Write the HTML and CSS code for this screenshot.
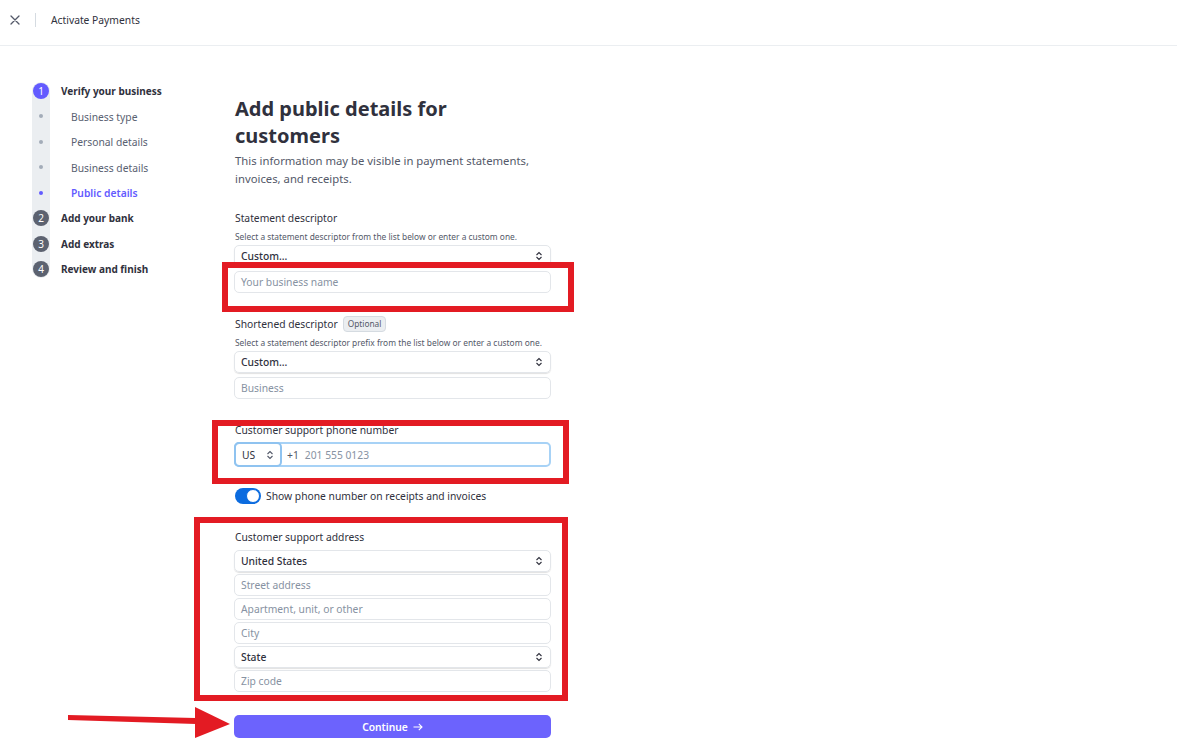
FILE: index.html
```html
<!DOCTYPE html>
<html>
<head>
<meta charset="utf-8">
<link rel="stylesheet" href="styles.css">
</head>
<body>
<div class="page">
  <header class="topbar">
    <svg class="close" width="10" height="10" viewBox="0 0 10 10"><path d="M1 1L9 9M9 1L1 9" stroke="#545969" stroke-width="1.3" stroke-linecap="round"/></svg>
    <span class="divider"></span>
    <span class="title">Activate Payments</span>
  </header>
  <div class="layout">
    <nav class="sidebar">
      <div class="steps">
        <div class="rail"></div>
        <span class="num active r1">1</span><span class="step-label r1">Verify your business</span>
        <span class="dot r2"></span><span class="sub r2">Business type</span>
        <span class="dot r3"></span><span class="sub r3">Personal details</span>
        <span class="dot r4"></span><span class="sub r4">Business details</span>
        <span class="dot active r5"></span><span class="sub current r5">Public details</span>
        <span class="num r6">2</span><span class="step-label r6">Add your bank</span>
        <span class="num r7">3</span><span class="step-label r7">Add extras</span>
        <span class="num r8">4</span><span class="step-label r8">Review and finish</span>
      </div>
    </nav>
    <main class="main">
      <h1 class="heading">Add public details for customers</h1>
      <p class="lead">This information may be visible in payment statements, invoices, and receipts.</p>

      <section class="group g1">
        <div class="label">Statement descriptor</div>
        <div class="help">Select a statement descriptor from the list below or enter a custom one.</div>
        <div class="field select"><span>Custom...</span><svg class="chev" width="8" height="10" viewBox="0 0 8 10"><path d="M1.5 4L4 1.5L6.5 4M1.5 6L4 8.5L6.5 6" fill="none" stroke="#30313d" stroke-width="1.1"/></svg></div>
        <div class="field input gap4"><span class="ph">Your business name</span></div>
      </section>

      <section class="group g2">
        <div class="label">Shortened descriptor <span class="badge">Optional</span></div>
        <div class="help">Select a statement descriptor prefix from the list below or enter a custom one.</div>
        <div class="field select"><span>Custom...</span><svg class="chev" width="8" height="10" viewBox="0 0 8 10"><path d="M1.5 4L4 1.5L6.5 4M1.5 6L4 8.5L6.5 6" fill="none" stroke="#30313d" stroke-width="1.1"/></svg></div>
        <div class="field input gap4"><span class="ph">Business</span></div>
      </section>

      <section class="group g3">
        <div class="label">Customer support phone number</div>
        <div class="phone">
          <div class="cc"><span>US</span><svg width="8" height="10" viewBox="0 0 8 10"><path d="M1.5 4L4 1.5L6.5 4M1.5 6L4 8.5L6.5 6" fill="none" stroke="#545969" stroke-width="1.1"/></svg></div>
          <span class="prefix">+1</span>
          <span class="ph">201 555 0123</span>
        </div>
      </section>

      <div class="toggle-row">
        <span class="toggle"><span class="knob"></span></span>
        <span>Show phone number on receipts and invoices</span>
      </div>

      <section class="group g4">
        <div class="label">Customer support address</div>
        <div class="stack">
          <div class="field select"><span>United States</span><svg class="chev" width="8" height="10" viewBox="0 0 8 10"><path d="M1.5 4L4 1.5L6.5 4M1.5 6L4 8.5L6.5 6" fill="none" stroke="#30313d" stroke-width="1.1"/></svg></div>
          <div class="field input"><span class="ph">Street address</span></div>
          <div class="field input"><span class="ph">Apartment, unit, or other</span></div>
          <div class="field input"><span class="ph">City</span></div>
          <div class="field select"><span>State</span><svg class="chev" width="8" height="10" viewBox="0 0 8 10"><path d="M1.5 4L4 1.5L6.5 4M1.5 6L4 8.5L6.5 6" fill="none" stroke="#30313d" stroke-width="1.1"/></svg></div>
          <div class="field input"><span class="ph">Zip code</span></div>
        </div>
      </section>

      <button class="continue">Continue <svg class="arrow" width="10" height="8" viewBox="0 0 10 8"><path d="M0.5 4H9M5.8 0.8L9 4L5.8 7.2" fill="none" stroke="#fff" stroke-width="1.1"/></svg></button>
    </main>
  </div>

  <div class="mark m1"></div>
  <div class="mark m2"></div>
  <div class="mark m3"></div>
  <svg class="pointer" width="170" height="36" viewBox="0 0 170 36">
    <polygon points="0,8 128,11 128,17 0,13" fill="#e31b23"/>
    <polygon points="127,0 162,17 127,31" fill="#e31b23"/>
  </svg>
</div>
</body>
</html>
```

FILE: styles.css
```css
* { box-sizing: border-box; }
html, body { margin: 0; padding: 0; background: #fff; }
body {
  font-family: "Noto Sans", "Open Sans", sans-serif;
  color: #30313d;
  font-size: 10.3px;
}
.page { position: relative; width: 1177px; height: 742px; overflow: hidden; }

.topbar {
  height: 46px;
  border-bottom: 1px solid #ebeef1;
  display: flex;
  align-items: center;
  padding-left: 10px;
}
.close { display: block; margin-top: -6px; }
.divider { width: 1px; height: 14px; background: #d5dbe1; margin: -6px 15px 0 15px; }
.title { font-size: 10.3px; color: #30313d; margin-top: -6px; }

.layout { display: flex; }
.sidebar { width: 234px; padding-left: 32px; padding-top: 32px; flex: none; }
.steps {
  display: grid;
  grid-template-columns: 18px auto;
  grid-template-rows: repeat(8, 25.5px);
  column-gap: 11px;
  align-items: center;
}
.rail {
  grid-column: 1; grid-row: 1 / -1;
  align-self: stretch;
  margin: 3.75px 0;
  background: #ebeef1;
  border-radius: 9px;
}
.num, .dot { grid-column: 1; justify-self: center; }
.step-label, .sub { grid-column: 2; }
.r1 { grid-row: 1; } .r2 { grid-row: 2; } .r3 { grid-row: 3; } .r4 { grid-row: 4; }
.r5 { grid-row: 5; } .r6 { grid-row: 6; } .r7 { grid-row: 7; } .r8 { grid-row: 8; }
.num {
  width: 16px; height: 16px; border-radius: 50%;
  background: #5c6270; color: #fff;
  font-size: 10px; line-height: 16px; text-align: center;
}
.num.active { background: #635bff; }
.dot { width: 4px; height: 4px; border-radius: 50%; background: #a3acb9; }
.dot.active { background: #635bff; }
.step-label { font-weight: 700; font-size: 10px; color: #30313d; }
.sub { padding-left: 10px; font-size: 10.3px; color: #596171; margin-top: 1px; }
.sub.current { color: #635bff; font-weight: 600; }

.main { width: 317px; padding-top: 49px; }
.heading {
  margin: 0 0 0 1px;
  font-size: 20px; line-height: 27px; font-weight: 700;
  max-width: 260px;
  color: #30313d;
}
.lead {
  margin: 3px 0 0 1px;
  font-size: 11.3px; line-height: 18px;
  color: #545969;
  max-width: 300px;
}
.label { font-size: 10.3px; line-height: 16px; color: #30313d; display: flex; align-items: center; padding-left: 1px; }
.help { font-size: 8.4px; line-height: 12px; color: #545969; margin-top: 5px; margin-bottom: 2px; padding-left: 1px; }
.badge {
  display: inline-block; margin-left: 5px;
  font-size: 8.3px; line-height: 12px; padding: 1px 4px;
  border: 1px solid #d5dbe1; border-radius: 4px; background: #ebeef1; color: #545969;
}
.field {
  height: 22px; border-radius: 5px;
  display: flex; align-items: center; justify-content: space-between;
  padding: 0 7px 0 6px;
  font-size: 10.3px;
}
.select { border: 1px solid #e3e6ea; box-shadow: 0 1px 1px rgba(0,0,0,0.12); font-weight: 500; color: #30313d; }
.input { border: 1px solid #e3e6ea; }
.ph { color: #8792a2; font-size: 10.3px; }
.gap4 { margin-top: 4px; }
.chev { display: block; }

.g1 { margin-top: 22px; }
.g2 { margin-top: 23px; }
.g3 { margin-top: 23px; }
.g3 .label { margin-bottom: 4px; }
.phone {
  height: 25px;
  border: 2px solid #a7d2f6;
  border-radius: 5px;
  display: flex; align-items: center;
}
.cc {
  height: 25px; width: 48px; margin: -2px 0 -2px -2px;
  border: 2px solid #8fc3f0; border-radius: 5px;
  display: flex; align-items: center; justify-content: space-between;
  padding: 0 6px 0 6px;
  font-size: 10.3px; color: #30313d;
}
.cc svg { display: block; }
.prefix { margin-left: 5px; color: #545969; }
.phone .ph { margin-left: 6px; }

.toggle-row { display: flex; align-items: center; gap: 5px; margin-top: 21px; height: 16px; font-size: 10.3px; padding-left: 1px; }
.toggle {
  width: 26px; height: 16px; border-radius: 8px; background: #0b6bdf;
  display: flex; align-items: center; justify-content: flex-end; padding-right: 1px;
}
.knob { width: 14px; height: 14px; border-radius: 50%; background: #fff; border: 1px solid #0b6bdf; }

.g4 { margin-top: 25px; }
.g4 .label { margin-bottom: 5px; }
.stack { display: flex; flex-direction: column; gap: 2px; }

.continue {
  margin-top: 23px;
  width: 317px; height: 23px;
  border: none; border-radius: 5px;
  background: #6c63fd; color: #fff;
  font-family: inherit; font-size: 10.3px; font-weight: 600;
  display: flex; align-items: center; justify-content: center; gap: 5px;
}
.arrow { display: block; }

.mark { position: absolute; border: 6px solid #e31b23; }
.m1 { left: 222px; top: 262px; width: 352px; height: 50px; }
.m2 { left: 212px; top: 420px; width: 357px; height: 64px; }
.m3 { left: 194px; top: 517px; width: 374px; height: 184px; }
.pointer { position: absolute; left: 68px; top: 707px; }
```
